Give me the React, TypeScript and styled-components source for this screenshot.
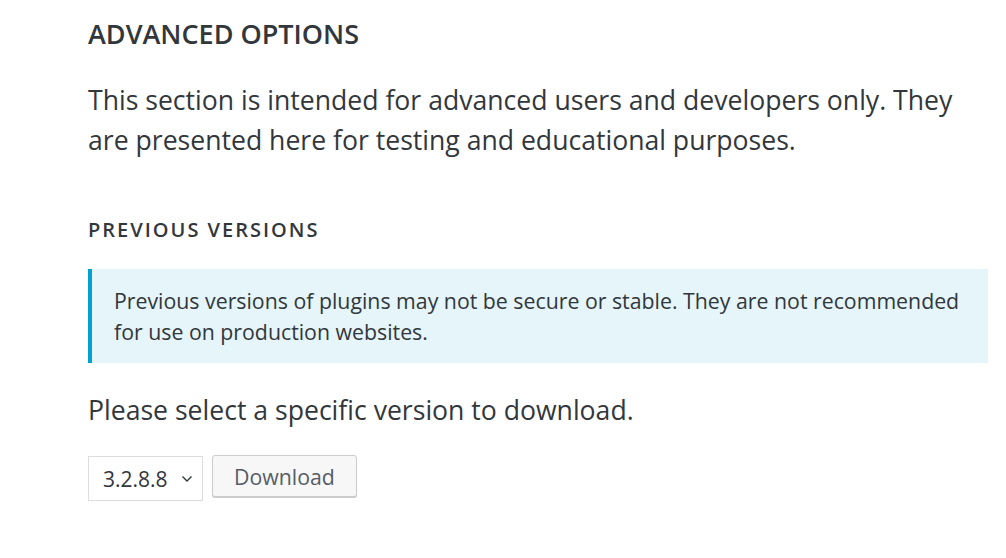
import React from "react";
import styled, { createGlobalStyle } from "styled-components";

const Global = createGlobalStyle`
  html, body { margin: 0; padding: 0; background: #fff; }
  body { font-family: "Open Sans", "Noto Sans", sans-serif; color: #32373c; }
`;

const Page = styled.main`
  padding: 16px 18px 40px 88px;
  width: 900px;
`;

const Heading = styled.h2`
  margin: 0;
  font-size: 27px;
  font-weight: 600;
  line-height: 36px;
  text-transform: uppercase;
  color: #32373c;
`;

const Intro = styled.p`
  margin: 28px 0 0;
  font-size: 26.6px;
  line-height: 40px;
`;

const SubHeading = styled.h3`
  margin: 56px 0 0;
  font-size: 20px;
  font-weight: 600;
  letter-spacing: 2px;
  line-height: 28px;
  text-transform: uppercase;
`;

const Notice = styled.div`
  margin-top: 25px;
  background: #e5f5fa;
  border-left: 4px solid #00a0d2;
  padding: 16px 12px 16px 22px;
  font-size: 21.3px;
  line-height: 31px;
`;

const Prompt = styled.p`
  margin: 27px 0 0;
  font-size: 26.6px;
  line-height: 40px;
`;

const Controls = styled.form`
  display: flex;
  align-items: flex-start;
  gap: 9px;
  margin-top: 25px;
`;

const Select = styled.select`
  appearance: none;
  height: 45px;
  width: 115px;
  padding: 0 30px 0 14px;
  border: 1px solid #dddddd;
  border-radius: 0;
  background-color: #fff;
  background-image: url("data:image/svg+xml;utf8,<svg xmlns='http://www.w3.org/2000/svg' width='12' height='8' viewBox='0 0 12 8'><path d='M1.5 1.5 L6 6 L10.5 1.5' fill='none' stroke='%2332373c' stroke-width='1.4'/></svg>");
  background-repeat: no-repeat;
  background-position: right 9px center;
  font-family: "Open Sans", sans-serif;
  font-size: 21px;
  color: #32373c;
  margin-top: 1px;
`;

const Button = styled.button`
  height: 42px;
  padding: 0 21px;
  border: 1px solid #cccccc;
  border-radius: 3px;
  background: #f7f7f7;
  box-shadow: 0 1px 0 #cccccc;
  font-family: "Open Sans", sans-serif;
  font-size: 21.3px;
  color: #555d66;
  cursor: pointer;
`;

export default function App() {
  return (
    <>
      <Global />
      <Page>
        <Heading>Advanced Options</Heading>
        <Intro>
          This section is intended for advanced users and developers only. They
          are presented here for testing and educational purposes.
        </Intro>
        <SubHeading>Previous Versions</SubHeading>
        <Notice>
          Previous versions of plugins may not be secure or stable. They are not
          recommended for use on production websites.
        </Notice>
        <Prompt>Please select a specific version to download.</Prompt>
        <Controls onSubmit={(e) => e.preventDefault()}>
          <Select defaultValue="3.2.8.8">
            <option value="3.2.8.8">3.2.8.8</option>
            <option value="3.2.8.7">3.2.8.7</option>
            <option value="trunk">trunk</option>
          </Select>
          <Button type="submit">Download</Button>
        </Controls>
      </Page>
    </>
  );
}
